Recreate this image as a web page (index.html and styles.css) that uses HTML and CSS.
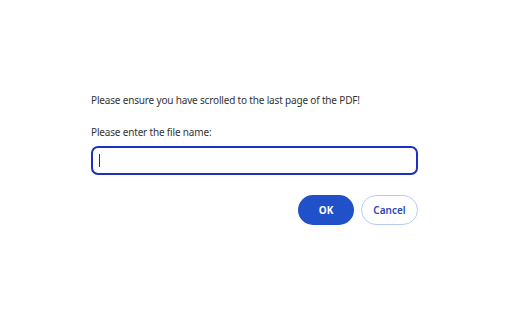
FILE: index.html
```html
<!DOCTYPE html>
<html>
<head>
<meta charset="utf-8">
<link rel="stylesheet" href="styles.css">
</head>
<body>
<div class="dialog">
  <p class="msg">Please ensure you have scrolled to the last page of the PDF!</p>
  <label class="label" for="fname">Please enter the file name:</label>
  <div class="field"><span class="caret"></span></div>
  <div class="actions">
    <button class="btn ok">OK</button>
    <button class="btn cancel">Cancel</button>
  </div>
</div>
</body>
</html>
```
FILE: styles.css
```css
html, body {
  margin: 0;
  background: #ffffff;
}
.dialog {
  width: 327px;
  margin-left: 91px;
  padding-top: 93px;
  font-family: "Noto Sans", "Open Sans", sans-serif;
  font-size: 10px;
  letter-spacing: -0.17px;
  color: #333333;
  display: flex;
  flex-direction: column;
}
.msg {
  margin: 0;
  line-height: 15px;
}
.label {
  margin-top: 17px;
  line-height: 15px;
}
.field {
  margin-top: 6px;
  height: 25px;
  border: 2px solid #1c30c2;
  border-radius: 7px;
  display: flex;
  align-items: center;
  padding-left: 6px;
}
.caret {
  width: 1px;
  height: 13px;
  background: #333333;
}
.actions {
  margin-top: 20px;
  display: flex;
  justify-content: flex-end;
  gap: 7px;
}
.btn {
  height: 30px;
  border-radius: 15px;
  font-family: "Noto Sans", "Open Sans", sans-serif;
  font-size: 10px;
  padding: 0;
  cursor: pointer;
}
.ok {
  width: 56px;
  background: #2151c9;
  border: none;
  color: #ffffff;
  font-weight: bold;
}
.cancel {
  width: 57px;
  background: #ffffff;
  border: 1px solid #b9caf2;
  color: #2a48b8;
  font-weight: 600;
}
```
